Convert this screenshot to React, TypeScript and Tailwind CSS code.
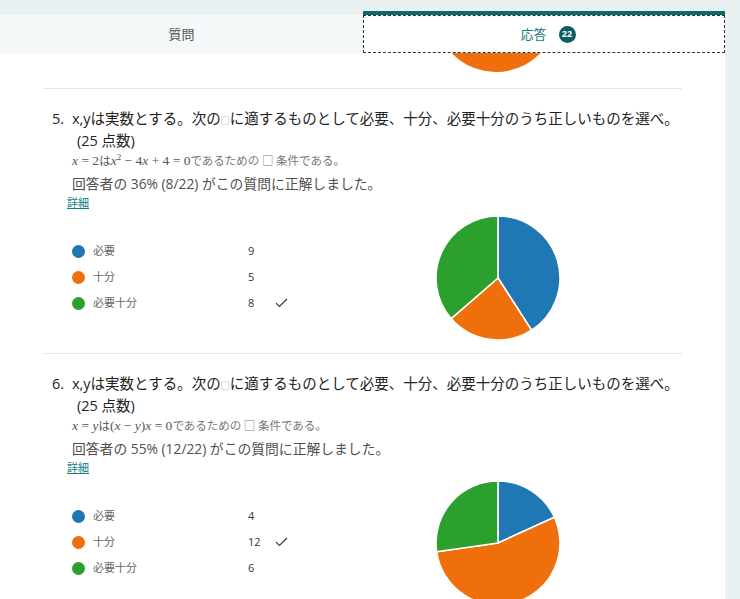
import React from "react";

const COLORS = ["#1f77b4", "#ee6f0b", "#2ca02c"];

function Pie({ data, size = 126 }: { data: number[]; size?: number }) {
  const r = size / 2 - 1;
  const cx = size / 2;
  const cy = size / 2;
  const total = data.reduce((a, b) => a + b, 0);
  let acc = 0;
  const paths = data.map((v, i) => {
    const a0 = (acc / total) * Math.PI * 2 - Math.PI / 2;
    acc += v;
    const a1 = (acc / total) * Math.PI * 2 - Math.PI / 2;
    const large = a1 - a0 > Math.PI ? 1 : 0;
    const x0 = cx + r * Math.cos(a0);
    const y0 = cy + r * Math.sin(a0);
    const x1 = cx + r * Math.cos(a1);
    const y1 = cy + r * Math.sin(a1);
    const d = `M${cx},${cy} L${x0},${y0} A${r},${r} 0 ${large} 1 ${x1},${y1} Z`;
    return <path key={i} d={d} fill={COLORS[i]} stroke="#fff" strokeWidth={1.6} strokeLinejoin="round" />;
  });
  return (
    <svg width={size} height={size} viewBox={`0 0 ${size} ${size}`}>
      {paths}
    </svg>
  );
}

function Check() {
  return (
    <svg width="13" height="10" viewBox="0 0 13 10">
      <path d="M1 5.2 L4.4 8.4 L12 1" fill="none" stroke="#333" strokeWidth="1.1" />
    </svg>
  );
}

const jp = { fontFamily: '"Noto Sans CJK JP", sans-serif' };
const ui = { fontFamily: '"Open Sans", "Noto Sans CJK JP", sans-serif' };
const serif = { fontFamily: '"Liberation Serif", "Noto Sans CJK JP", serif' };

function Question({
  num,
  math,
  pct,
  data,
  correct,
}: {
  num: string;
  math: React.ReactNode;
  pct: string;
  data: number[];
  correct: number;
}) {
  const labels = ["必要", "十分", "必要十分"];
  return (
    <div className="flex flex-col shrink-0">
      <div className="ml-[43px] w-[639px] h-px bg-[#e6e6e6] shrink-0" />
      <div className="pt-[20px] pl-[52px] flex flex-col shrink-0">
        <div className="flex text-[14.5px] leading-[20px] text-[#222] shrink-0" style={ui}>
          <span className="w-[20px]">{num}</span>
          <div className="flex flex-col">
            <span className="whitespace-nowrap">
              x,yは実数とする。次の<span className="text-[9px] text-[#888]">□</span>に適するものとして必要、十分、必要十分のうち正しいものを選べ。
            </span>
            <span className="pl-[5px]">(25 点数)</span>
          </div>
        </div>
        <div className="-mt-[1px] pl-[20px] h-[22px] flex items-center text-[13.5px] text-[#555] shrink-0 whitespace-nowrap" style={serif}>
          {math}
        </div>
        <div className="mt-[1px] pl-[20px] h-[22px] flex items-center text-[13.8px] text-[#505050] shrink-0" style={ui}>
          {pct}
        </div>
        <div className="-mt-[1px] pl-[15px] h-[16px] flex items-center shrink-0">
          <span className="text-[11px] text-[#0f7f80] underline" style={jp}>詳細</span>
        </div>
        <div className="mt-[5px] h-[128px] flex shrink-0">
          <div className="pt-[23px] flex flex-col">
            {labels.map((l, i) => (
              <div key={l} className="h-[26px] flex items-center">
                <span className="ml-[20px] w-[13px] h-[13px] rounded-full" style={{ background: COLORS[i] }} />
                <span className="ml-[8px] w-[155px] text-[11px] text-[#666]" style={serif}>{l}</span>
                <span className="w-[27px] text-[11px] text-[#333]" style={ui}>{data[i]}</span>
                <span className="w-[14px] flex items-center">{i === correct ? <Check /> : null}</span>
              </div>
            ))}
          </div>
          <div className="ml-[146px]">
            <Pie data={data} />
          </div>
        </div>
        <div className="h-[10px] shrink-0" />
      </div>
    </div>
  );
}

export default function App() {
  return (
    <div className="w-[740px] h-[599px] bg-[#e9f1f3] flex overflow-hidden">
      <div className="w-[725px] flex flex-col pt-[11px]">
        <div className="flex h-[42px] shrink-0">
          <div className="w-[363px] mt-[4px] bg-[#f3f8f9] flex items-center justify-center text-[13px] text-[#555]" style={jp}>
            質問
          </div>
          <div className="flex-1 bg-white border-t-4 border-[#0b6b6b] flex">
            <div className="flex-1 border border-dashed border-[#333] flex items-center justify-center gap-[12px]">
              <span className="ml-[8px] text-[13px] text-[#13787a]" style={jp}>応答</span>
              <span className="w-[17px] h-[17px] rounded-full bg-[#0b5e62] text-white text-[9px] font-bold flex items-center justify-center" style={ui}>
                22
              </span>
            </div>
          </div>
        </div>
        <div className="flex-1 bg-white flex flex-col overflow-hidden">
          <div className="h-[35px] pl-[433px] shrink-0">
            <svg width="126" height="20" viewBox="0 0 126 20">
              <circle cx="63" cy="-42" r="61" fill="#ee6f0b" />
            </svg>
          </div>
          <Question
            num="5."
            math={
              <span>
                <i>x</i> = 2<span style={jp} className="text-[11.5px]">は</span><i>x</i>
                <sup className="text-[9px]">2</sup> − 4<i>x</i> + 4 = 0
                <span style={jp} className="text-[11.5px] text-[#777]">であるための □ 条件である。</span>
              </span>
            }
            pct="回答者の 36% (8/22) がこの質問に正解しました。"
            data={[9, 5, 8]}
            correct={2}
          />
          <Question
            num="6."
            math={
              <span>
                <i>x</i> = <i>y</i><span style={jp} className="text-[11.5px]">は</span>(<i>x</i> − <i>y</i>)<i>x</i> = 0
                <span style={jp} className="text-[11.5px] text-[#777]">であるための □ 条件である。</span>
              </span>
            }
            pct="回答者の 55% (12/22) がこの質問に正解しました。"
            data={[4, 12, 6]}
            correct={1}
          />
        </div>
      </div>
    </div>
  );
}
